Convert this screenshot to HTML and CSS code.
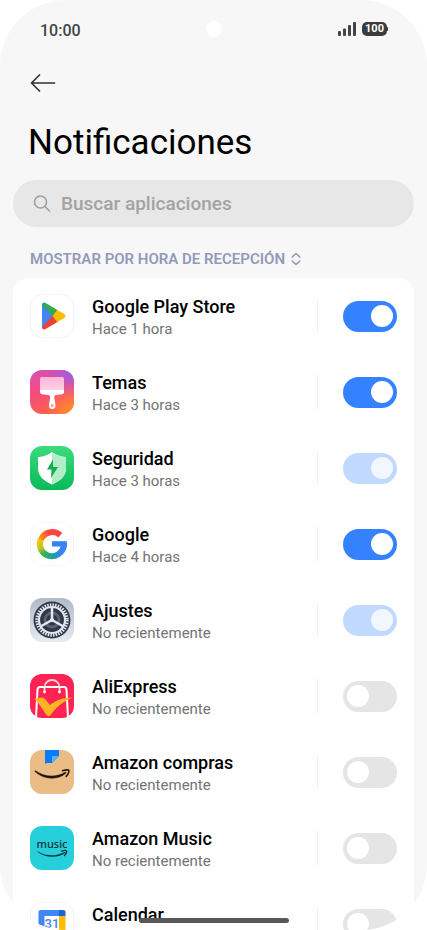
FILE: index.html
```html
<!DOCTYPE html>
<html lang="es">
<head>
<meta charset="utf-8">
<meta name="viewport" content="width=device-width, initial-scale=1">
<title>Notificaciones</title>
<link rel="stylesheet" href="styles.css">
</head>
<body>
<div class="screen">
  <header class="status">
    <span class="time">10:00</span>
    <span class="camera"></span>
    <span class="indicators">
      <svg width="18" height="14" viewBox="0 0 18 14" fill="#444"><rect x="0" y="9" width="3" height="5" rx="1"/><rect x="5" y="6.500" width="3" height="7.500" rx="1"/><rect x="10" y="3" width="3" height="11" rx="1"/><rect x="15" y="0" width="3" height="14" rx="1"/></svg>
      <span class="battery">100</span>
    </span>
  </header>
  <main>
    <button class="back" type="button" aria-label="Atrás">
      <svg width="26" height="18" viewBox="0 0 26 18" fill="none" stroke="#333" stroke-width="1.700" stroke-linecap="round" stroke-linejoin="round"><path d="M24.500 9H1.500M9.500 1L1.500 9l8 8"/></svg>
    </button>
    <h1>Notificaciones</h1>
    <label class="search">
      <svg width="18" height="18" viewBox="0 0 18 18" fill="none" stroke="#a0a0a0" stroke-width="1.600" stroke-linecap="round"><circle cx="7.500" cy="7" r="6"/><path d="M12 11.500L16.500 16"/></svg>
      <input type="search" placeholder="Buscar aplicaciones" aria-label="Buscar aplicaciones">
    </label>
    <button class="sort" type="button">MOSTRAR POR HORA DE RECEPCIÓN
      <svg width="10" height="14" viewBox="0 0 10 14" fill="none" stroke="#929ab8" stroke-width="1.500" stroke-linecap="round" stroke-linejoin="round"><path d="M1.200 5L5 1.500 8.800 5M1.200 9L5 12.500 8.800 9"/></svg>
    </button>
    <ul class="apps">
      <li class="app">
        <svg class="icon" viewBox="0 0 44 44"><rect x=".5" y=".5" width="43" height="43" rx="11.500" fill="#fff" stroke="#f4f4f4"/>
          <path d="M12 9.500v25L23.500 22z" fill="#4285f4"/><path d="M12 11c0-2.300 1.700-3.100 3.600-2L27.500 16 23 22.500 12 11z" fill="#34a853"/><path d="M12 33c0 2.300 1.700 3.100 3.600 2L27.500 28 23 21.500z" fill="#ea4335"/><path d="M27.300 15.900L34 19.800c2 1.200 2 3.200 0 4.400l-6.700 3.900L22.600 22z" fill="#fbbc04"/></svg>
        <label class="text" for="play"><span class="name">Google Play Store</span><span class="when">Hace 1 hora</span></label>
        <span class="control"><input class="switch" id="play" type="checkbox" checked></span>
      </li>
      <li class="app">
        <svg class="icon" viewBox="0 0 44 44"><defs><linearGradient id="t1" x1="0" y1="0" x2="0.300" y2="1"><stop stop-color="#d650b5"/><stop offset=".5" stop-color="#f64b80"/><stop offset="1" stop-color="#fb5f50"/></linearGradient><radialGradient id="t2" cx=".95" cy="0" r=".7"><stop stop-color="#8b60f0"/><stop offset="1" stop-color="#c058d0" stop-opacity="0"/></radialGradient><radialGradient id="t3" cx="1" cy="1" r=".75"><stop stop-color="#ff9e18"/><stop offset="1" stop-color="#ff7048" stop-opacity="0"/></radialGradient><linearGradient id="t4" x2="0" y2="1"><stop stop-color="#ffb3da"/><stop offset="1" stop-color="#ffd5e6"/></linearGradient></defs>
          <rect width="44" height="44" rx="12" fill="url(#t1)"/><rect width="44" height="44" rx="12" fill="url(#t2)"/><rect width="44" height="44" rx="12" fill="url(#t3)"/>
          <path d="M11.500 7h21q1.500 0 1.500 1.500V21H10V8.500Q10 7 11.500 7z" fill="url(#t4)"/><path d="M10 20h24v2.300q0 1.700-1.700 1.900l-6.300.8c-1.600.3-2 1.500-1.600 3.500l1 6c.5 3-1.300 4.500-3.200 4.500s-3.700-1.500-3.200-4.500l1-6c.4-2 0-3.200-1.600-3.500l-6.500-.8Q10 24 10 22z" fill="#fff"/><circle cx="22.200" cy="35.500" r="1.500" fill="#f5a094"/></svg>
        <label class="text" for="temas"><span class="name">Temas</span><span class="when">Hace 3 horas</span></label>
        <span class="control"><input class="switch" id="temas" type="checkbox" checked></span>
      </li>
      <li class="app">
        <svg class="icon" viewBox="0 0 44 44"><defs><linearGradient id="s1" x2="0" y2="1"><stop stop-color="#3edb7c"/><stop offset="1" stop-color="#08b958"/></linearGradient></defs><rect width="44" height="44" rx="12" fill="url(#s1)"/>
          <path d="M22 6c4 3 8.500 4.500 13.500 5 .5 0 .5.500.5 1v10c0 8-5.500 13-14 16.500C13.500 35 8 30 8 22V12c0-.5 0-1 .5-1C13.500 10.500 18 9 22 6z" fill="#fff"/><path d="M22 6c4 3 8.500 4.500 13.500 5 .5 0 .5.500.5 1v10c0 8-5.500 13-14 16.500z" fill="#b1edc9"/><path d="M23 13.500L17 23.500h4.500L21 32l7-11h-5z" fill="#12ae50"/></svg>
        <label class="text" for="seguridad"><span class="name">Seguridad</span><span class="when">Hace 3 horas</span></label>
        <span class="control"><input class="switch" id="seguridad" type="checkbox" checked disabled></span>
      </li>
      <li class="app">
        <svg class="icon" viewBox="0 0 44 44"><defs><linearGradient id="g1" gradientUnits="userSpaceOnUse" x1="31" y1="10" x2="8" y2="20"><stop offset=".45" stop-color="#fb443f"/><stop offset=".8" stop-color="#fb8b18"/><stop offset="1" stop-color="#fcc40c"/></linearGradient><linearGradient id="g2" gradientUnits="userSpaceOnUse" x1="8" y1="18" x2="17" y2="33"><stop stop-color="#fcc40c"/><stop offset=".45" stop-color="#c8c71c"/><stop offset=".85" stop-color="#30b157"/></linearGradient><linearGradient id="g3" gradientUnits="userSpaceOnUse" x1="16" y1="34" x2="31" y2="29"><stop stop-color="#2db35b"/><stop offset=".5" stop-color="#199daf"/><stop offset="1" stop-color="#3b83f6"/></linearGradient></defs>
          <rect x=".5" y=".5" width="43" height="43" rx="11.500" fill="#fff" stroke="#f6f6f6"/>
          <g fill="none" stroke-width="6"><path d="M30.300 13.200A12.300 12.300 0 0 0 10.700 18" stroke="url(#g1)"/><path d="M10.800 17.500A12.300 12.300 0 0 0 17 33.300" stroke="url(#g2)"/><path d="M16.500 33A12.300 12.300 0 0 0 34 21.800" stroke="url(#g3)"/></g><path d="M22 19.200h14.900v5.300H22z" fill="#3583f7"/></svg>
        <label class="text" for="google"><span class="name">Google</span><span class="when">Hace 4 horas</span></label>
        <span class="control"><input class="switch" id="google" type="checkbox" checked></span>
      </li>
      <li class="app">
        <svg class="icon" viewBox="0 0 44 44"><defs><linearGradient id="a2" x2="0" y2="1"><stop stop-color="#b0bac8"/><stop offset="1" stop-color="#e6ebf2"/></linearGradient></defs><rect width="44" height="44" rx="12" fill="url(#a2)"/>
          <circle cx="22" cy="22" r="18.500" fill="#303746"/><circle cx="22" cy="22" r="15" fill="none" stroke="#dfe5ed" stroke-width="3.500" stroke-dasharray="1.500 1.118"/><circle cx="22" cy="22" r="13" fill="none" stroke="#dfe5ed" stroke-width="2.200"/><circle cx="22" cy="22" r="7" fill="none" stroke="#596172" stroke-width="3"/><path d="M22 22V9M22 22l-11.500 6.500M22 22l11.500 6.500" stroke="#e5eaf1" stroke-width="2.500"/><circle cx="22" cy="22" r="2" fill="#e5eaf1"/></svg>
        <label class="text" for="ajustes"><span class="name">Ajustes</span><span class="when">No recientemente</span></label>
        <span class="control"><input class="switch" id="ajustes" type="checkbox" checked disabled></span>
      </li>
      <li class="app">
        <svg class="icon" viewBox="0 0 44 44"><rect width="44" height="44" rx="12" fill="#ff2353"/>
          <path d="M6 44L7.500 15.500q.2-2.500 2.700-2.500h23.600q2.500 0 2.700 2.500L38 44" fill="none" stroke="#fff" stroke-width="2"/><path d="M14.500 18v-4.500a7.500 7.500 0 0 1 15 0V18" fill="none" stroke="#ffd6df" stroke-width="1.800"/><circle cx="14.500" cy="18" r="1.400" fill="#fff"/><circle cx="29.500" cy="18" r="1.400" fill="#fff"/>
          <path d="M4.500 24.500l7.500-1q2-.2 3 1.500l5 6c5-4 12-7.500 23-7.500-9 3-17 10-22.500 17.500-1.200 1.600-2.700 1.600-4 0C12.500 35.500 9.500 30 4.500 24.500z" fill="#ffb423"/></svg>
        <label class="text" for="aliexpress"><span class="name">AliExpress</span><span class="when">No recientemente</span></label>
        <span class="control"><input class="switch" id="aliexpress" type="checkbox"></span>
      </li>
      <li class="app">
        <svg class="icon" viewBox="0 0 44 44"><rect width="44" height="44" rx="12" fill="#ebbc86"/>
          <path d="M15 0h14v6l-7 7h-5.500L15 14z" fill="#087bf9"/><path d="M22 6h7l-7 7.500z" fill="#57b4fb"/><path d="M5.500 20.800C14 27 26 28 35 22.300c.8-.5 1.500.3.800 1C27 31 13 29 5 21.500c-.4-.5 0-1 .5-.7z" fill="#1c160e" stroke="#1c160e" stroke-width=".5"/><path d="M32.500 20.800c3-.9 6-1 6.300-.4.400.800-.5 4-2.600 6" fill="none" stroke="#1c160e" stroke-width="1.600" stroke-linecap="round"/></svg>
        <label class="text" for="compras"><span class="name">Amazon compras</span><span class="when">No recientemente</span></label>
        <span class="control"><input class="switch" id="compras" type="checkbox"></span>
      </li>
      <li class="app">
        <svg class="icon" viewBox="0 0 44 44"><rect width="44" height="44" rx="12" fill="#27cfda"/>
          <text class="music" x="22" y="22" text-anchor="middle">music</text><path d="M8 25.500C16 30.500 26 30.600 34.500 26c.7-.3 1.100.4.500.9C27 32.700 15 31.500 7.600 26c-.5-.4-.2-.800.4-.5z" fill="#103138"/><path d="M31.500 25.200c2-.7 4.700-.8 5-.3.300.6-.4 3-2 4.700" fill="none" stroke="#103138" stroke-width="1.300" stroke-linecap="round"/></svg>
        <label class="text" for="music"><span class="name">Amazon Music</span><span class="when">No recientemente</span></label>
        <span class="control"><input class="switch" id="music" type="checkbox"></span>
      </li>
      <li class="app">
        <svg class="icon" viewBox="0 0 44 44"><rect x=".5" y=".5" width="43" height="43" rx="11.500" fill="#fff" stroke="#f4f4f4"/>
          <path d="M10.500 8H29v6H14.500v15H8.500V10q0-2 2-2z" fill="#4285f4"/><path d="M29 8h4.500q2 0 2 2v4H29z" fill="#1967d2"/><path d="M29 14h6.500v16H29z" fill="#fbbc04"/><path d="M8.500 29.500H29v6H10.500q-2 0-2-2z" fill="#34a853"/><path d="M29 29.500h6.500l-6.500 6z" fill="#ea4335"/><text class="day" x="22" y="25.500" text-anchor="middle">31</text></svg>
        <label class="text" for="calendar"><span class="name">Calendar</span></label>
        <span class="control"><input class="switch" id="calendar" type="checkbox"></span>
      </li>
    </ul>
  </main>
  <div class="home-bar"></div>
</div>
</body>
</html>
```
FILE: styles.css
```css
* {
  box-sizing: border-box;
}

body {
  margin: 0;
  background: #fff;
  font-family: Roboto, sans-serif;
  color: #000;
}

button {
  padding: 0;
  border: 0;
  background: none;
  font: inherit;
}

.screen {
  position: relative;
  height: 100vh;
  overflow: hidden;
  border-radius: 66px;
  background: #f7f7f7;
}

.status {
  position: relative;
  display: flex;
  justify-content: space-between;
  align-items: center;
  height: 60px;
  padding: 0 40px;
}

.time {
  font-size: 16px;
  font-weight: 500;
  color: #444;
}

.camera {
  position: absolute;
  top: 21px;
  left: calc(50% - 8px);
  width: 16px;
  height: 16px;
  border-radius: 50%;
  background: #fff;
}

.indicators {
  display: flex;
  align-items: center;
  gap: 6px;
  padding-bottom: 2px;
}

.battery {
  position: relative;
  width: 25px;
  height: 14px;
  border-radius: 5px;
  background: #3c3c3c;
  color: #fff;
  font-size: 11px;
  font-weight: 700;
  line-height: 14px;
  text-align: center;
}

.battery::after {
  content: "";
  position: absolute;
  top: 5px;
  right: -1px;
  width: 2px;
  height: 4px;
  border-radius: 1px;
  background: #3c3c3c;
}

main {
  padding: 0 13px;
}

.back {
  display: flex;
  align-items: center;
  height: 46px;
  padding-left: 17px;
}

h1 {
  margin: 0;
  padding: 12px 15px;
  font-size: 35px;
  font-weight: 400;
  line-height: 50px;
}

.search {
  display: flex;
  align-items: center;
  gap: 10px;
  height: 47px;
  padding: 0 20px;
  border-radius: 24px;
  background: #e7e7e7;
}

.search input {
  flex: 1;
  min-width: 0;
  padding: 0;
  border: 0;
  outline: 0;
  background: none;
  font: 500 19px Roboto, sans-serif;
}

.search input::placeholder {
  color: #a3a3a3;
}

.sort {
  display: flex;
  align-items: center;
  gap: 6px;
  height: 51px;
  padding: 13px 17px 0;
  color: #929ab8;
  font-size: 15px;
  font-weight: 600;
}

.apps {
  margin: 0;
  padding: 0 17px;
  border-radius: 16px;
  background: #fff;
  list-style: none;
}

.app {
  display: flex;
  align-items: center;
  height: 76px;
}

.icon {
  flex: none;
  width: 44px;
  height: 44px;
  margin-right: 18px;
}

.text {
  display: flex;
  flex: 1;
  flex-direction: column;
  height: 44px;
}

.name {
  font-size: 18px;
  font-weight: 500;
  line-height: 25px;
}

.when {
  color: #737373;
  font-size: 15px;
  line-height: 20px;
}

.control {
  display: flex;
  align-items: center;
  height: 36px;
  padding-left: 25px;
  border-left: 1px solid #f3f3f3;
}

.switch {
  display: flex;
  align-items: center;
  width: 54px;
  height: 31px;
  margin: 0;
  padding: 0 4px;
  border-radius: 16px;
  background: #e5e5e5;
  appearance: none;
}

.switch::before {
  content: "";
  width: 22px;
  height: 22px;
  border-radius: 50%;
  background: #fff;
}

.switch:checked {
  justify-content: flex-end;
  background: #3482ff;
}

.switch:checked:disabled {
  background: #c2d9ff;
}

.switch:checked:disabled::before {
  background: #f2f7ff;
}

.music {
  font: 500 11px "Noto Sans", sans-serif;
  fill: #103138;
}

.day {
  font: 500 13px Roboto, sans-serif;
  fill: #4285f4;
}

.home-bar {
  position: absolute;
  bottom: 7px;
  left: calc(50% - 75px);
  width: 150px;
  height: 5px;
  border-radius: 3px;
  background: #585858;
}
```
